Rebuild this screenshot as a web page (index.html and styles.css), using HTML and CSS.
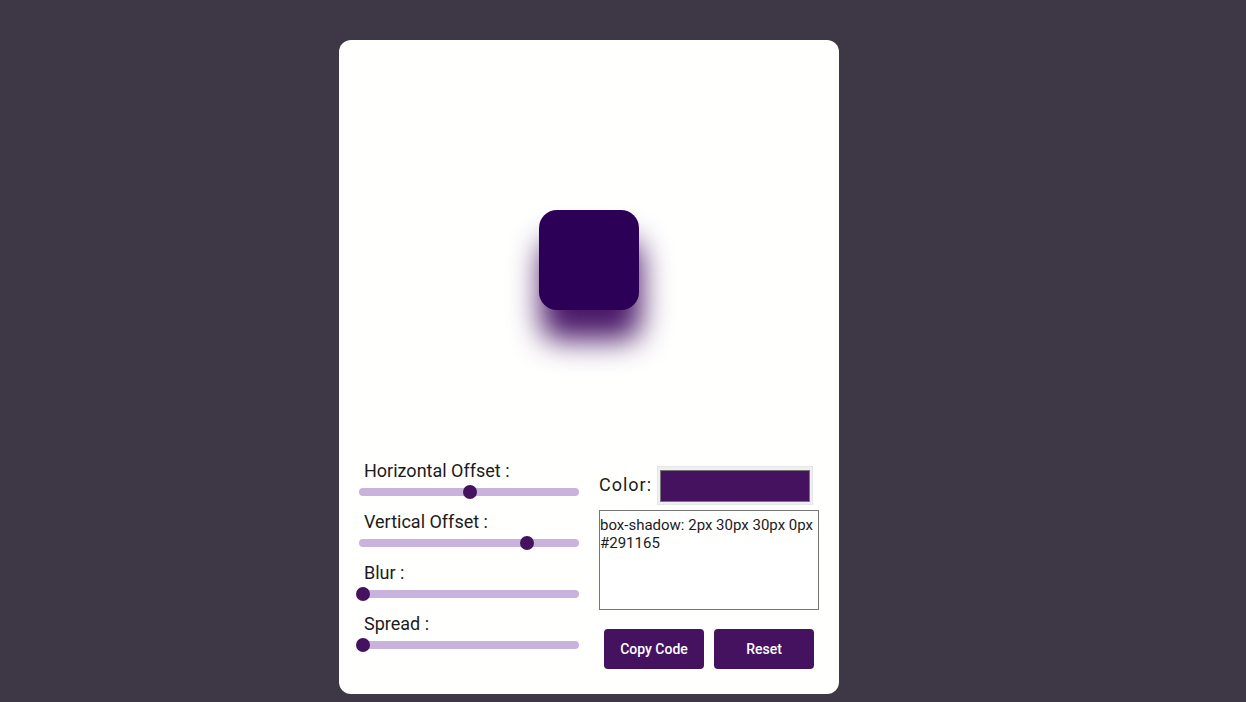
FILE: index.html
```html
<!DOCTYPE html>
<html>
<head>
<meta charset="utf-8">
<link rel="stylesheet" href="styles.css">
</head>
<body>
<div class="card">
  <div class="preview">
    <div class="box"></div>
  </div>
  <div class="controls">
    <div class="sliders">
      <div class="group">
        <label class="lbl">Horizontal Offset :</label>
        <div class="track"><input class="range" type="range" min="0" max="212" value="107"></div>
      </div>
      <div class="group">
        <label class="lbl">Vertical Offset :</label>
        <div class="track"><input class="range" type="range" min="0" max="212" value="164"></div>
      </div>
      <div class="group">
        <label class="lbl">Blur :</label>
        <div class="track"><input class="range" type="range" min="0" max="212" value="0"></div>
      </div>
      <div class="group">
        <label class="lbl">Spread :</label>
        <div class="track"><input class="range" type="range" min="0" max="212" value="0"></div>
      </div>
    </div>
    <div class="side">
      <div class="color-row">
        <span class="color-lbl">Color:</span>
        <div class="color-input"><div class="swatch"></div></div>
      </div>
      <textarea class="code">box-shadow: 2px 30px 30px 0px #291165</textarea>
      <div class="buttons">
        <button class="btn">Copy Code</button>
        <button class="btn">Reset</button>
      </div>
    </div>
  </div>
</div>
</body>
</html>
```

FILE: styles.css
```css
html, body {
  margin: 0;
  padding: 0;
}
body {
  background: #3e3746;
  font-family: Roboto, "Liberation Sans", sans-serif;
  height: 702px;
  overflow: hidden;
}
.card {
  box-sizing: border-box;
  width: 500px;
  height: 654px;
  margin: 40px 0 0 339px;
  background: #fffffe;
  border-radius: 12px;
  padding: 20px 20px 0 20px;
}
.preview {
  height: 400px;
  display: flex;
  align-items: center;
  justify-content: center;
}
.box {
  width: 100px;
  height: 100px;
  border-radius: 18px;
  background: #2b0056;
  box-shadow: 2px 30px 30px 0px #4a1868;
}
.controls {
  display: grid;
  grid-template-columns: 220px 220px;
  column-gap: 20px;
}
.sliders {
  display: flex;
  flex-direction: column;
}
.group {
  display: flex;
  flex-direction: column;
  margin-bottom: 12px;
}
.lbl {
  display: block;
  font-size: 18px;
  line-height: 22px;
  height: 22px;
  color: #1b1b1b;
  padding-left: 5px;
}
.track {
  width: 220px;
  height: 8px;
  margin: 6px 0 3px 0;
  border-radius: 4px;
  background: #c9b3dd;
  display: flex;
  align-items: center;
}
.range {
  -webkit-appearance: none;
  appearance: none;
  flex: none;
  width: 226px;
  height: 14px;
  margin: 0 0 0 -3px;
  padding: 0;
  background: transparent;
}
.range::-webkit-slider-runnable-track {
  height: 14px;
  background: transparent;
}
.range::-webkit-slider-thumb {
  -webkit-appearance: none;
  appearance: none;
  width: 14px;
  height: 14px;
  border-radius: 50%;
  background: #45125f;
}
.side {
  display: flex;
  flex-direction: column;
}
.color-row {
  height: 48px;
  display: flex;
  align-items: center;
}
.color-lbl {
  font-size: 18px;
  letter-spacing: 1px;
  color: #1b1b1b;
  margin-right: 5px;
}
.color-input {
  box-sizing: border-box;
  width: 156px;
  height: 39px;
  background: #efefef;
  border: 1px solid #e6e6e6;
  padding: 3px 2px 2px 2px;
  margin-top: 2px;
}
.swatch {
  box-sizing: border-box;
  width: 100%;
  height: 100%;
  background: #45125f;
  border: 1px solid #777;
}
.code {
  box-sizing: border-box;
  width: 220px;
  height: 100px;
  margin: 2px 0 0 0;
  padding: 5px 0 0 0;
  border: 1px solid #767676;
  font-family: Roboto, "Liberation Sans", sans-serif;
  font-size: 15px;
  line-height: 18px;
  color: #1b1b1b;
  resize: none;
  outline: none;
}
.buttons {
  display: flex;
  justify-content: center;
  gap: 10px;
  margin-top: 19px;
}
.btn {
  width: 100px;
  height: 40px;
  border: none;
  border-radius: 4px;
  background: #45125f;
  color: #fff;
  font-family: Roboto, "Liberation Sans", sans-serif;
  font-size: 14px;
  font-weight: 500;
}
```
